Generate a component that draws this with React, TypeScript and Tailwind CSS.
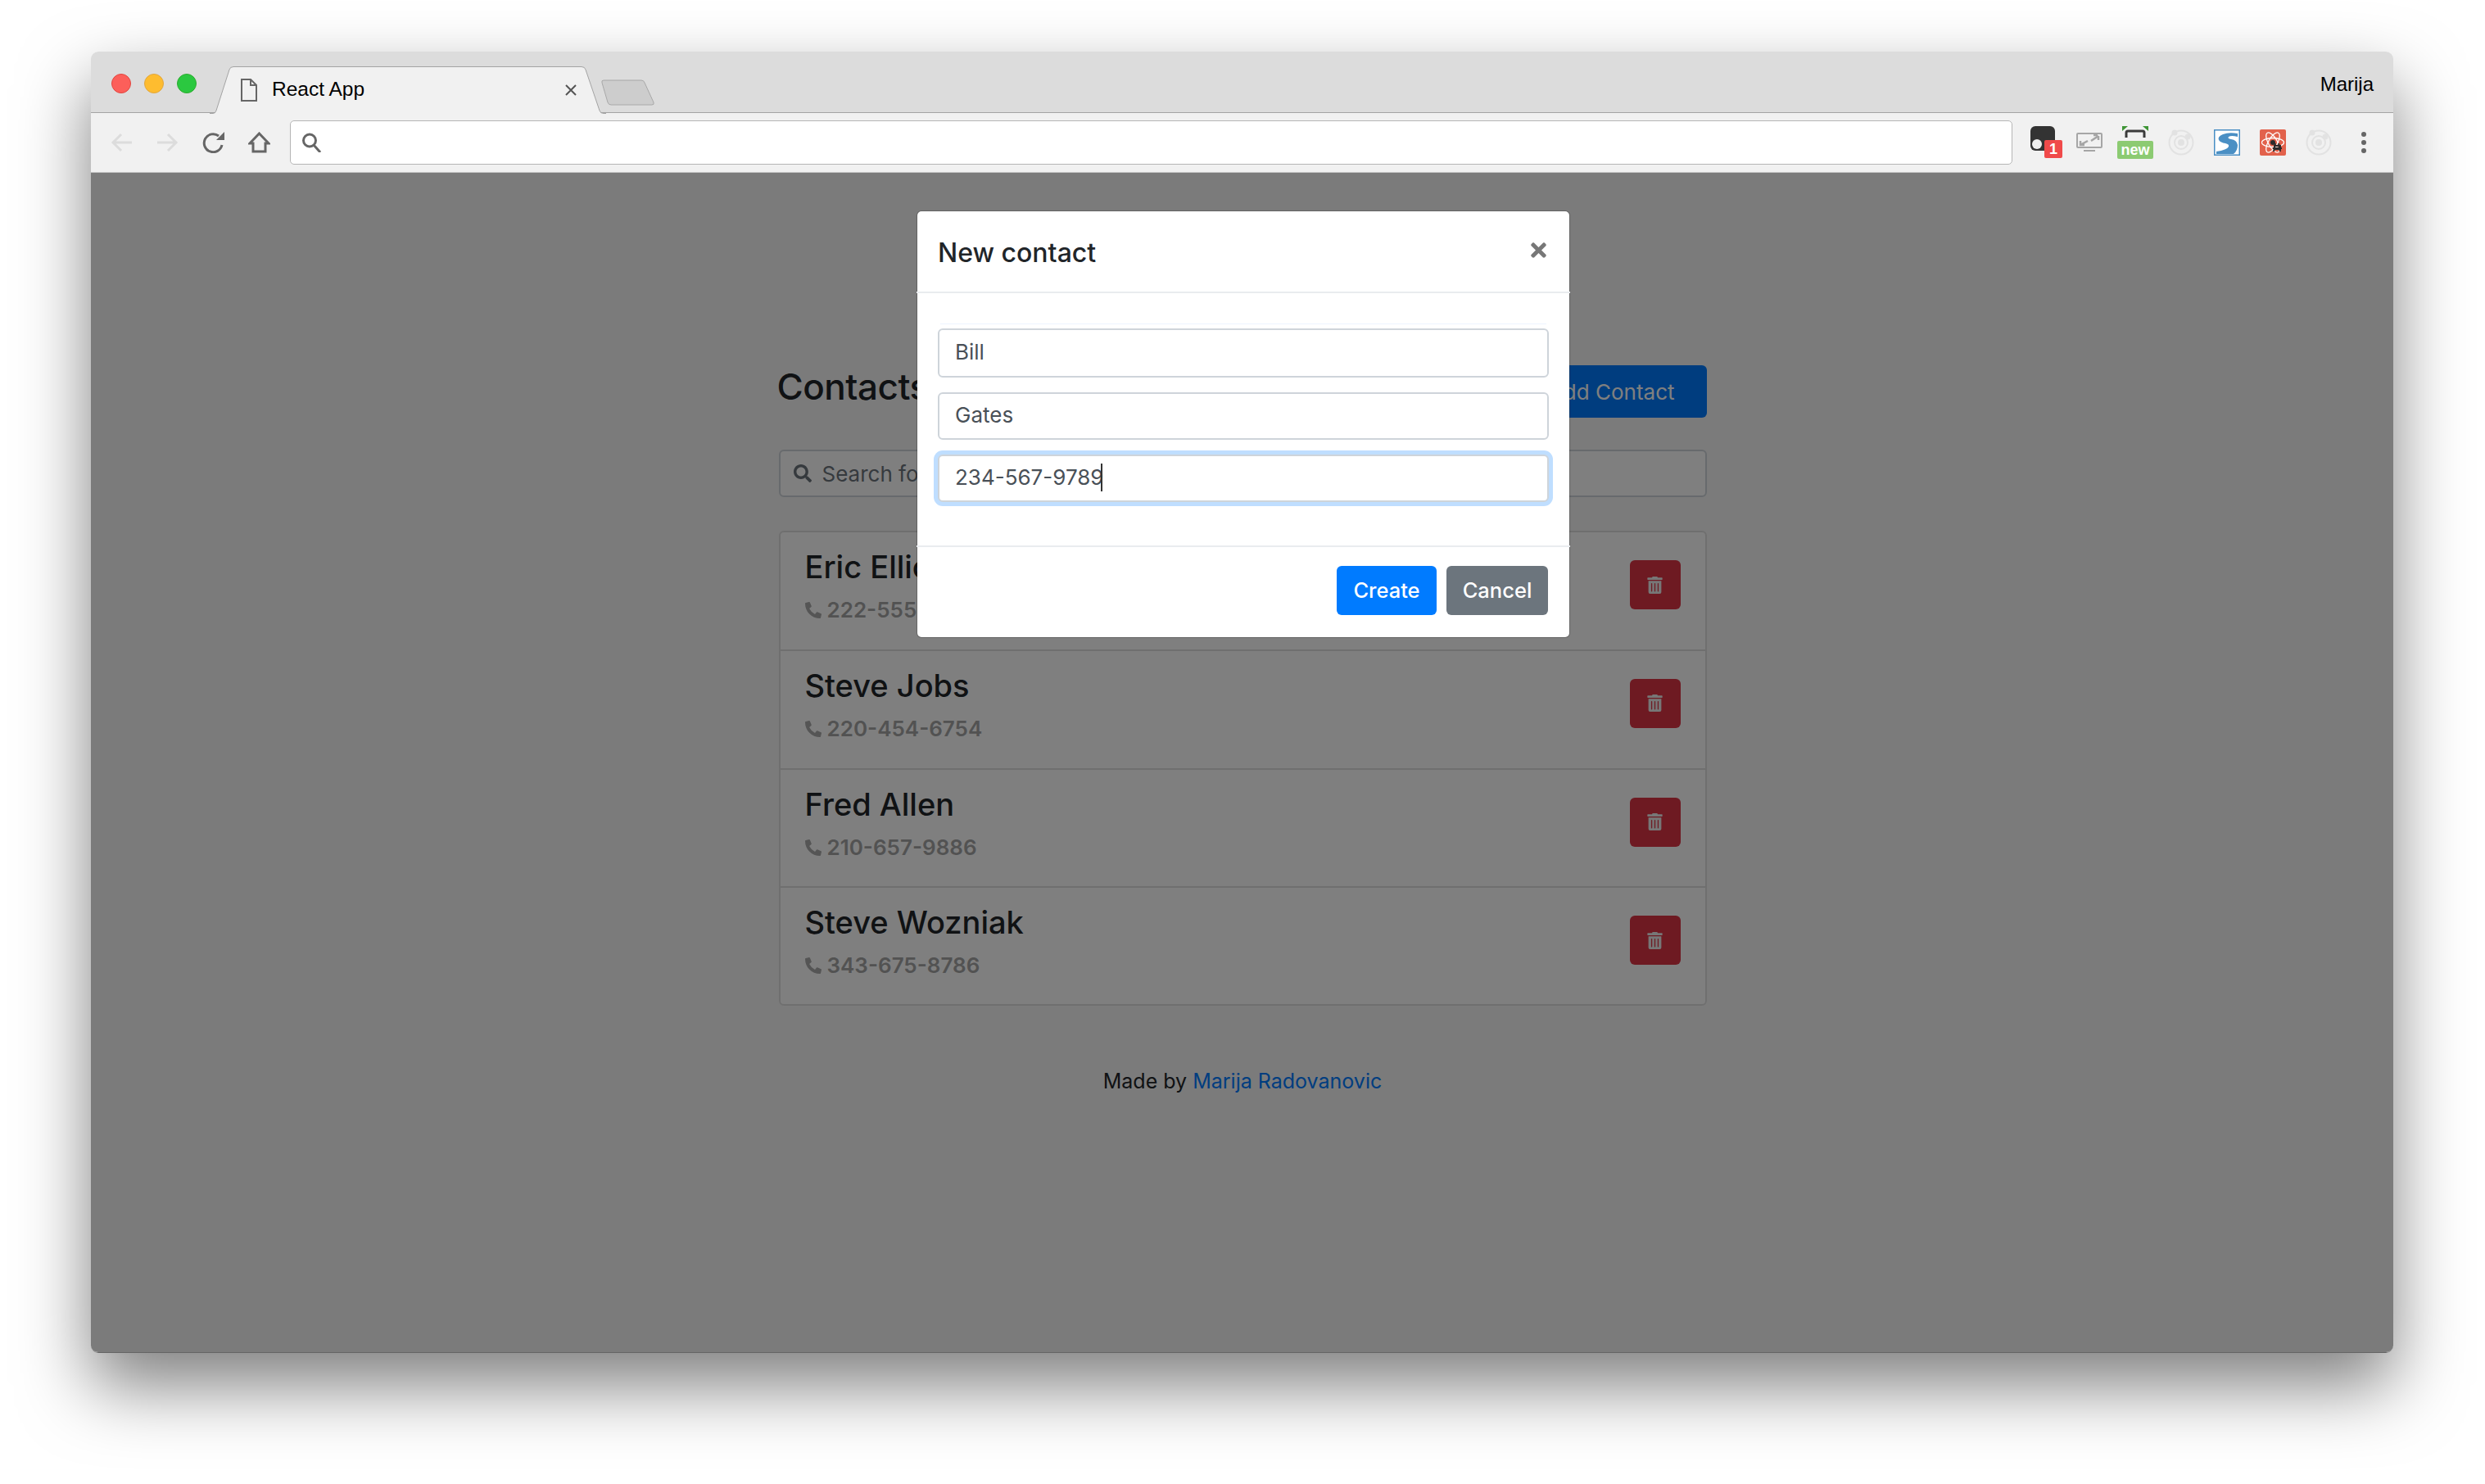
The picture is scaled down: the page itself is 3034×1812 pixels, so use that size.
import React from 'react';
import { FaPhoneAlt, FaSearch, FaTimes, FaTrashAlt } from 'react-icons/fa';

const contacts = [
  { id: 1, name: 'Eric Elliot', phone: '222-555-6575' },
  { id: 2, name: 'Steve Jobs', phone: '220-454-6754' },
  { id: 3, name: 'Fred Allen', phone: '210-657-9886' },
  { id: 4, name: 'Steve Wozniak', phone: '343-675-8786' },
];

const TrafficLights = () => (
  <div className="flex gap-[16px] pl-[25px] pt-[27px]">
    <div className="h-[24px] w-[24px] rounded-full border border-[#e2463f] bg-[#fc5f5a]" />
    <div className="h-[24px] w-[24px] rounded-full border border-[#e1a73e] bg-[#febc2f]" />
    <div className="h-[24px] w-[24px] rounded-full border border-[#2dac2f] bg-[#2bc840]" />
  </div>
);

const TabShape = () => (
  <svg className="absolute inset-0" width="484" height="58" viewBox="0 0 484 58">
    <path d="M0 57.5H4Q7 57.5 8 54L24 4Q25 .5 29 .5H454Q458 .5 459 4L476 54Q477 57.5 481 57.5H484" fill="#f1f1f1" stroke="#a3a3a3" />
  </svg>
);

const TitleBar = () => (
  <div className="relative flex h-[75px] shrink-0 border-b border-[#a3a3a3] bg-[#dcdcdc]">
    <TrafficLights />
    <div className="relative ml-[16px] mt-[18px] flex h-[58px] w-[484px] items-center font-['Liberation_Sans',sans-serif] text-[24.5px] text-black">
      <TabShape />
      <svg className="relative ml-[38px]" width="20" height="28" viewBox="0 0 20 28" fill="none" stroke="#666" strokeWidth="2">
        <path d="M1 1H12L19 8V27H1Z" />
        <path d="M12 1V8H19" />
      </svg>
      <span className="relative ml-[18px] mt-[-1px]">React App</span>
      <svg className="relative ml-[244px]" width="16" height="16" viewBox="0 0 16 16" stroke="#555" strokeWidth="2">
        <path d="M2 2L14 14M14 2L2 14" />
      </svg>
    </div>
    <svg className="mt-[34px] ml-[-7px]" width="66" height="32" viewBox="0 0 66 32">
      <path d="M2 4Q1 1 4 1H50Q53 1 54 4L65 28Q66 31 63 31H13Q10 31 9 28Z" fill="#cdcdcd" stroke="#a8a8a8" />
    </svg>
    <span className="ml-auto mr-[24px] mt-[26px] font-['Liberation_Sans',sans-serif] text-[24px] leading-[28px] text-black">Marija</span>
  </div>
);

const TargetIcon = () => (
  <svg className="shrink-0" width="32" height="32" viewBox="0 0 32 32" fill="none" stroke="#e2e2e2" strokeWidth="2">
    <circle cx="16" cy="16" r="14.5" />
    <circle cx="16" cy="16" r="8" strokeWidth="2" />
    <circle cx="16" cy="16" r="4" fill="#e2e2e2" stroke="none" />
    <circle cx="8" cy="4" r="3.5" fill="#e2e2e2" stroke="none" />
    <circle cx="24" cy="9" r="3.5" fill="#e2e2e2" stroke="none" />
  </svg>
);

const Toolbar = () => (
  <div className="flex h-[73px] shrink-0 items-center border-b border-[#c4c4c4] bg-[#f1f1f1]">
    <svg className="ml-[24px]" width="27" height="24" viewBox="0 0 27 24" fill="none" stroke="#dcdcdc" strokeWidth="3">
      <path d="M26 12H3M13 2L3 12L13 22" />
    </svg>
    <svg className="ml-[29px]" width="27" height="24" viewBox="0 0 27 24" fill="none" stroke="#dcdcdc" strokeWidth="3">
      <path d="M1 12H24M14 2L24 12L14 22" />
    </svg>
    <svg className="ml-[29px]" width="28" height="26" viewBox="0 0 28 26" fill="none" stroke="#666" strokeWidth="3">
      <path d="M20 5A11 11 0 1 0 24 16" />
      <path d="M17 10H27V0Z" fill="#666" stroke="none" />
    </svg>
    <svg className="ml-[28px]" width="27" height="26" viewBox="0 0 27 26" fill="none" stroke="#666" strokeWidth="3">
      <path d="M13.5 2L25 14H21V24H6V14H2Z" />
    </svg>
    <div className="ml-[24px] flex h-[54px] w-[2103px] items-center rounded-[5px] border border-[#b5b5b5] bg-white pl-[13px]">
      <svg width="25" height="24" viewBox="0 0 25 24" fill="none" stroke="#666" strokeWidth="3">
        <circle cx="10" cy="9.5" r="7.5" />
        <path d="M15 15L23 24" />
      </svg>
    </div>
    <div className="relative ml-[22px] h-[40px] w-[40px] shrink-0">
      <div className="absolute left-0 top-0 h-[30px] w-[30px] rounded-[6px] bg-[#333]" />
      <div className="absolute left-[2px] top-[16px] h-[12px] w-[12px] rounded-full bg-[#eee]" />
      <div className="absolute left-[17px] top-[17px] flex h-[22px] w-[22px] items-center justify-center rounded-[2px] bg-[#f04a4a] font-['Liberation_Sans',sans-serif] text-[18px] font-bold text-white">1</div>
    </div>
    <svg className="ml-[16px] shrink-0" width="32" height="24" viewBox="0 0 32 24" fill="none" stroke="#a6a6a6" strokeWidth="2">
      <rect x="1" y="1" width="30" height="17" rx="1" />
      <path d="M9 22H23" strokeWidth="2" />
      <path d="M18 10L27 4M26 3H21M27 4V9M14 10L5 15M5 10V15H10" strokeWidth="2.5" />
    </svg>
    <div className="relative ml-[18px] h-[40px] w-[44px] shrink-0">
      <svg className="absolute left-0 top-0" width="44" height="20" viewBox="0 0 44 20">
        <path d="M6 0H13L6 6ZM38 0H31L38 6Z" fill="#3f9536" />
        <path d="M11 14V8Q11 6 13 6H31Q33 6 33 8V14" fill="none" stroke="#3b3b3b" strokeWidth="3" />
      </svg>
      <div className="absolute bottom-0 left-0 flex h-[22px] w-[44px] items-center justify-center rounded-[2px] bg-[#8ccb72] font-['Liberation_Sans',sans-serif] text-[18px] font-bold leading-none text-white">new</div>
    </div>
    <div className="ml-[18px] shrink-0"><TargetIcon /></div>
    <svg className="ml-[24px] shrink-0" width="32" height="32" viewBox="0 0 32 32">
      <rect width="32" height="32" fill="#4a8fc4" />
      <rect x="1.5" y="1.5" width="29" height="29" fill="#fff" />
      <path d="M29 5Q18 3 11 6Q4 9 6 13Q8 16 14 17Q19 18 18 21Q16 25 3 27V30H24Q29 26 29 19Q28 13 21 12Q16 11 18 9Q21 7 29 9Z" fill="#4a8fc4" />
    </svg>
    <svg className="ml-[24px] shrink-0" width="32" height="32" viewBox="0 0 32 32" fill="none">
      <rect width="32" height="32" rx="2" fill="#e2624c" />
      <g stroke="#fff" strokeWidth="1.3">
        <ellipse cx="16" cy="16" rx="13.5" ry="5.5" />
        <ellipse cx="16" cy="16" rx="13.5" ry="5.5" transform="rotate(60 16 16)" />
        <ellipse cx="16" cy="16" rx="13.5" ry="5.5" transform="rotate(120 16 16)" />
      </g>
      <circle cx="16" cy="16" r="3" fill="#2b2b2b" />
      <path d="M18 20H25V24H18ZM19 17L17 27M23 17L25 27M16 23H27" stroke="#2b2b2b" strokeWidth="2" />
    </svg>
    <div className="ml-[24px] shrink-0"><TargetIcon /></div>
    <div className="ml-[36px] flex flex-col gap-[4px]">
      <div className="h-[6px] w-[6px] rounded-full bg-[#666]" />
      <div className="h-[6px] w-[6px] rounded-full bg-[#666]" />
      <div className="h-[6px] w-[6px] rounded-full bg-[#666]" />
    </div>
  </div>
);

const ContactRow = ({ name, phone }: { name: string; phone: string }) => (
  <div className="flex h-[144.75px] items-start justify-between border-b-2 border-[#dfdfdf] pl-[30px] pr-[30px] pt-[20px] last:h-[142px] last:border-b-0">
    <div>
      <h3 className="text-[38px] font-medium leading-[44px] text-[#212529]">{name}</h3>
      <p className="mt-[12px] flex items-center text-[26px] font-semibold leading-[38px] text-[#a5a5a5]">
        <FaPhoneAlt className="mr-[7px] h-[20px] w-[20px] text-[#aaaaaa]" />
        {phone}
      </p>
    </div>
    <button className="mt-[14px] flex h-[60px] w-[62px] items-center justify-center rounded-[6px] bg-[#dc3545] text-white">
      <FaTrashAlt className="h-[21px] w-[19px] text-[#eeeeee]" />
    </button>
  </div>
);

const ContactsPage = () => (
  <div className="flex h-full flex-col items-center bg-[#f7f7f7] pt-[235px] pl-px">
    <div className="w-[1133px]">
      <div className="flex h-[64px] items-center justify-between">
        <h1 className="-ml-[2px] pb-[12px] text-[44px] font-medium leading-none tracking-[-0.5px] text-[#212529]">Contacts</h1>
        <button className="h-[64px] rounded-[6px] bg-[#007bff] px-[39px] text-[26px] text-white">Add Contact</button>
      </div>
      <div className="mt-[39px] flex h-[58px] items-center rounded-[6px] border-2 border-[#ced4da] bg-white pl-[16px]">
        <FaSearch className="mr-[13px] h-[22px] w-[22px] text-[#6c757d]" />
        <span className="text-[26px] text-[#6c757d]">Search for contact</span>
      </div>
      <div className="mt-[41px] rounded-[6px] border-2 border-[#dfdfdf] bg-white">
        {contacts.map((contact) => (
          <ContactRow key={contact.id} name={contact.name} phone={contact.phone} />
        ))}
      </div>
      <p className="mt-[72px] text-center text-[25px] leading-[40px] text-[#212529]">
        Made by <a className="text-[#007bff]">Marija Radovanovic</a>
      </p>
    </div>
  </div>
);

const inputClass = 'block w-full rounded-[6px] border-2 border-[#ced4da] bg-white px-[19px] pb-[3px] text-[26px] text-[#495057] outline-none';

const NewContactModal = () => (
  <div className="absolute inset-0 flex justify-center bg-black/50 pl-[3px] pt-[46px]">
    <div className="h-[522px] w-[798px] rounded-[6px] border border-black/20 bg-white bg-clip-padding">
      <div className="-mx-px flex h-[100px] items-center justify-between border-b-2 border-[#e9ecef] pl-[26px] pr-[25px]">
        <h2 className="pt-[3px] text-[32px] font-medium text-[#212529]">New contact</h2>
        <FaTimes className="mb-[4px] h-[27px] w-[27px] text-[#777777]" />
      </div>
      <div className="h-[308px] px-[25px] pt-[37px]">
        <div className="mx-[3px] h-px bg-[#edf5ff]" />
        <input className={inputClass + ' mt-[5px] h-[60px]'} value="Bill" readOnly />
        <input className={inputClass + ' mt-[18px] h-[58px]'} value="Gates" readOnly />
        <div className="relative mt-[18px]">
          <input className={inputClass + ' h-[58px] border-[#80bdff] shadow-[0_0_0_5px_#bfdeff]'} value="234-567-9789" readOnly />
          <div className="absolute left-[199px] top-[11px] h-[34px] w-[2px] bg-[#333]" />
        </div>
      </div>
      <div className="-mx-px flex h-[111px] justify-end gap-[12px] border-t-2 border-[#e9ecef] pr-[27px] pt-[23px]">
        <button className="h-[60px] w-[122px] rounded-[6px] bg-[#007bff] text-[25.5px] font-medium text-white">Create</button>
        <button className="h-[60px] w-[124px] rounded-[6px] bg-[#6c757d] text-[25.5px] font-medium text-white">Cancel</button>
      </div>
    </div>
  </div>
);

export default function App() {
  return (
    <div className="h-[1812px] w-[3034px] overflow-hidden bg-white pl-[111px] pt-[63px] font-['Inter',sans-serif]">
      <div className="flex h-[1589px] w-[2811px] flex-col overflow-hidden rounded-[9px] border-b border-[#656565] shadow-[0_40px_85px_rgba(0,0,0,0.5)]">
        <TitleBar />
        <Toolbar />
        <div className="relative flex-1">
          <ContactsPage />
          <NewContactModal />
        </div>
      </div>
    </div>
  );
}
